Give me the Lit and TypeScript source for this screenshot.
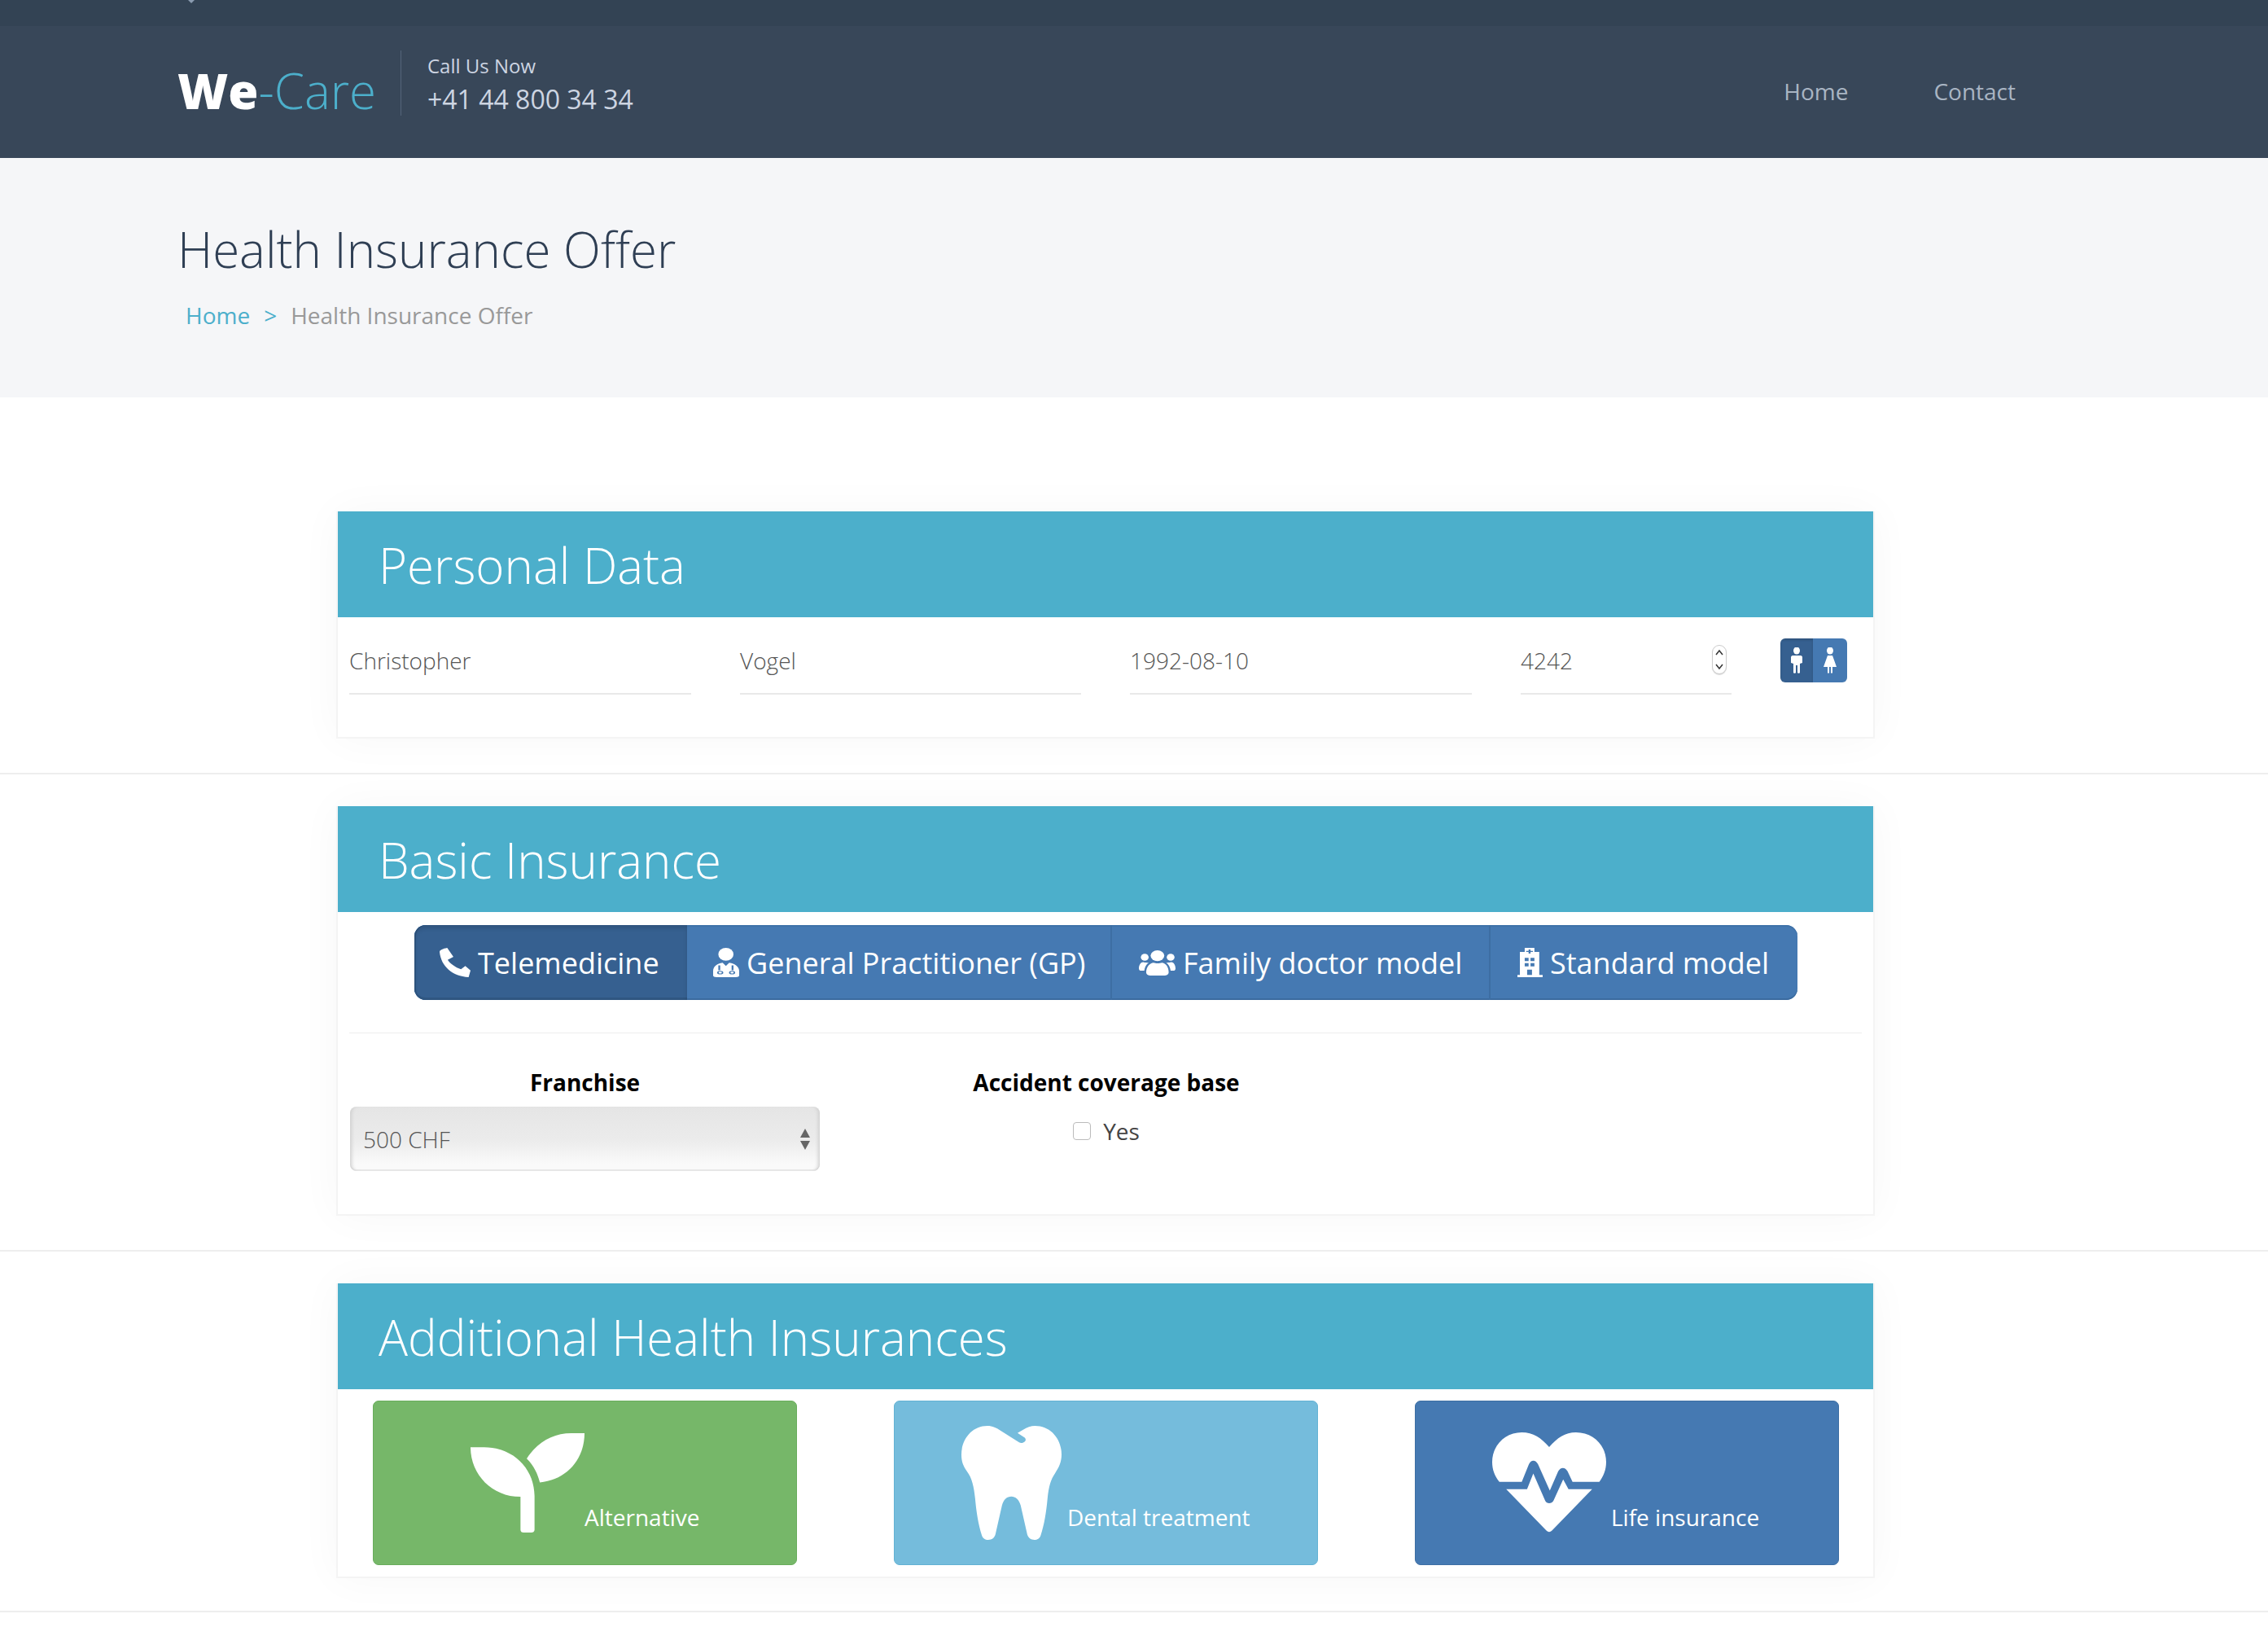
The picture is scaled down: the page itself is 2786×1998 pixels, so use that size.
import { LitElement, css, html, svg } from 'lit'
import { customElement } from 'lit/decorators.js'

const phoneIcon = svg`<path d="M105,172 C105,165 112,160 121,157 L134,190 L122,201 C127,215 138,228 150,236 L159,224 L170,240 L166,265 C132,262 108,225 105,172 Z" />`

const doctorIcon = svg`
  <ellipse cx="717" cy="181" rx="16" ry="24" />
  <path d="M690,260 L690,243 C690,226 698,216 710,212 L717,224 L724,212 C736,216 745,226 745,243 L745,260 C745,264 742,266 738,266 L697,266 C693,266 690,264 690,260 Z" />
  <path d="M703,222 L703,240 M731,222 L731,240" fill="none" stroke="#4579b2" stroke-width="4" />
  <circle cx="705" cy="249" r="5" fill="none" stroke="#4579b2" stroke-width="3" />
  <circle cx="730" cy="249" r="5" fill="none" stroke="#4579b2" stroke-width="3" />
`

const usersIcon = svg`
  <ellipse cx="201" cy="184" rx="14" ry="20" />
  <ellipse cx="175" cy="190" rx="8" ry="13" />
  <ellipse cx="228" cy="190" rx="8" ry="13" />
  <path d="M178,246 C178,225 186,210 193,210 C197,213 206,213 210,210 C217,210 224,225 224,246 C224,255 220,258 214,258 L188,258 C182,258 178,255 178,246 Z" />
  <path d="M163,232 C163,218 167,208 172,208 C176,210 179,210 183,210 C178,217 175,226 174,240 L168,240 C165,240 163,237 163,232 Z" />
  <path d="M238,232 C238,218 234,208 229,208 C225,210 222,210 219,210 C224,217 227,226 228,240 L233,240 C236,240 238,237 238,232 Z" />
`

const hospitalIcon = svg`<path fill-rule="evenodd" d="M935,172 L945,172 L945,157 L965,157 L965,172 L975,172 L975,258 L982,258 L982,266 L930,266 L930,258 L935,258 Z M953,163 L953,168 L948,168 L948,172 L953,172 L953,178 L957,178 L957,172 L962,172 L962,168 L957,168 L957,163 Z M945,194 L945,206 L953,206 L953,194 Z M957,194 L957,206 L965,206 L965,194 Z M945,214 L945,226 L953,226 L953,214 Z M957,214 L957,226 L965,226 L965,214 Z M950,238 L950,258 L960,258 L960,238 Z" />`

const sproutIcon = svg`
  <path d="M387,230 L430,230 C525,230 592,310 592,410 L592,535 C592,541 587,545 582,545 L557,545 C551,545 547,541 547,535 L547,413 C455,413 387,330 387,230 Z" />
  <path d="M567,272 C600,212 650,178 710,178 L752,178 C752,275 695,350 609,360 C602,328 590,298 567,272 Z" />
`

const toothIcon = svg`<path d="M345,152 C362,152 375,160 385,168 L447,213 C455,219 468,212 468,203 C468,198 465,195 462,193 L442,178 L460,166 C472,157 485,152 498,152 C548,152 583,200 583,258 C583,285 575,305 563,325 C548,350 542,375 538,420 C534,470 528,515 516,556 C513,566 505,572 496,572 C485,572 476,565 473,552 L452,445 C447,423 435,412 422,412 C408,412 397,423 392,445 L371,552 C368,565 360,572 348,572 C338,572 330,566 327,554 C316,515 310,470 306,420 C302,375 296,345 280,320 C268,300 262,285 262,258 C262,200 297,152 345,152 Z" />`

const heartIcon = svg`
  <path d="M316,361 C302,340 293,318 293,288 C293,225 335,178 388,178 C425,178 450,198 476,232 C502,198 527,178 562,178 C617,178 659,225 659,288 C659,318 650,340 637,361 L551,361 L535,322 C528,305 512,305 505,322 L478,393 L440,295 C432,278 418,278 411,295 L388,361 Z" />
  <path d="M338,388 L405,388 L425,330 L463,430 C468,443 484,443 490,430 L521,352 L538,388 L614,388 L487,538 C480,548 472,548 465,538 Z" />
`

const models = [
  { label: 'Telemedicine', icon: phoneIcon, box: '105 157 65 108', w: 38, h: 36, width: 335, pad: 31, active: true },
  { label: 'General Practitioner (GP)', icon: doctorIcon, box: '690 157 55 109', w: 32, h: 36, width: 522, pad: 32, active: false },
  { label: 'Family doctor model', icon: usersIcon, box: '163 164 75 94', w: 45, h: 31, width: 465, pad: 33, active: false },
  { label: 'Standard model', icon: hospitalIcon, box: '930 157 52 109', w: 31, h: 36, width: 377, pad: 33, active: false },
]

const tiles = [
  { label: 'Alternative', cls: 'green', icon: sproutIcon, box: '387 178 365 367', w: 140, h: 122, pad: 119, top: 39, gap: 0 },
  { label: 'Dental treatment', cls: 'sky', icon: toothIcon, box: '262 152 321 420', w: 123, h: 140, pad: 82, top: 30, gap: 7 },
  { label: 'Life insurance', cls: 'blue', icon: heartIcon, box: '293 178 366 370', w: 140, h: 123, pad: 94, top: 38, gap: 6 },
]

@customElement('app-root')
export class AppRoot extends LitElement {
  static override styles = css`
    :host {
      display: block;
      min-height: 1998px;
      overflow: hidden;
      background: #fff;
      font-family: 'Open Sans', 'Noto Sans', sans-serif;
      color: #666;
    }

    .strip {
      height: 32px;
      background: #334354;
      position: relative;
    }

    .strip::after {
      content: '';
      position: absolute;
      left: 231px;
      top: 0;
      border: 4px solid transparent;
      border-top-color: #8a9bb0;
    }

    .bar {
      height: 162px;
      box-sizing: border-box;
      background: #384759;
      display: flex;
      align-items: flex-start;
      padding: 30px 310px 0 218px;
    }

    .logo {
      margin-top: 9px;
      font-size: 60px;
      font-weight: 300;
      color: #4cafcb;
      line-height: 80px;
      width: 274px;
      white-space: nowrap;
    }

    .logo b {
      font-weight: 800;
      color: #fff;
    }

    .call {
      border-left: 1px solid #54657a;
      height: 80px;
      padding: 2px 0 0 32px;
      box-sizing: border-box;
      display: flex;
      flex-direction: column;
      color: #cdd5e2;
    }

    .call small {
      font-size: 24px;
      line-height: 34px;
    }

    .call span {
      margin-top: 2px;
      font-size: 32px;
      line-height: 44px;
    }

    nav {
      margin: 31px 0 0 auto;
      display: flex;
      gap: 105px;
      font-size: 28px;
      line-height: 38px;
      color: #a9b5c3;
    }

    .hero {
      height: 294px;
      box-sizing: border-box;
      background: #f5f6f8;
      padding: 72px 0 0 218px;
    }

    h1 {
      margin: 0;
      font-size: 60px;
      line-height: 80px;
      font-weight: 300;
      color: #2f3f54;
    }

    .crumbs {
      margin: 22px 0 0 10px;
      font-size: 28px;
      line-height: 38px;
      color: #999;
      display: flex;
      gap: 17px;
    }

    .crumbs a {
      color: #4cafcb;
    }

    .section {
      box-sizing: border-box;
      border-bottom: 2px solid #eee;
      padding: 39px 0 42px 413px;
    }

    .section.first {
      padding-top: 140px;
    }

    .section.last {
      padding-bottom: 40px;
    }

    .card {
      width: 1890px;
      box-sizing: border-box;
      background: #fff;
      border: 2px solid #f4f4f4;
      border-top: 0;
      box-shadow: 0 0 50px rgba(0, 0, 0, 0.035);
    }

    .card h2 {
      margin: 0;
      height: 130px;
      padding-left: 50px;
      background: #4cafcb;
      color: #fff;
      font-size: 60px;
      font-weight: 300;
      line-height: 132px;
    }

    .fields {
      height: 147px;
      padding: 26px 0 0 14px;
      box-sizing: border-box;
      display: flex;
      align-items: flex-start;
    }

    .field {
      border-bottom: 2px solid #e9e9e9;
      height: 67px;
      font-size: 28px;
      font-weight: 300;
      line-height: 54px;
      margin-right: 60px;
      color: #555;
      display: flex;
      justify-content: space-between;
    }

    .spin {
      width: 18px;
      height: 36px;
      margin: 8px 6px 0 0;
      border: 1px solid #ccc;
      border-radius: 9px;
      box-shadow: 0 1px 1px rgba(0, 0, 0, 0.15);
      box-sizing: border-box;
      background: #fff;
    }

    .spin svg {
      display: block;
    }

    .gender {
      display: flex;
      width: 82px;
      height: 54px;
      border-radius: 6px;
      overflow: hidden;
      box-shadow: inset 0 -2px 0 rgba(0, 0, 0, 0.1);
    }

    .gender i {
      flex: 1;
      display: flex;
      align-items: center;
      justify-content: center;
      background: #4579b2;
    }

    .gender i:first-child {
      flex: 0 0 40px;
      background: #366090;
      box-shadow: inset 0 2px 3px rgba(0, 0, 0, 0.15);
    }

    .models {
      margin: 16px 0 0 94px;
      width: 1699px;
      height: 92px;
      display: flex;
      border-radius: 14px;
      overflow: hidden;
      box-sizing: border-box;
      background: #4579b2;
      box-shadow: inset 0 -2px 0 #3b6b9f, inset 0 2px 0 #3f72a9;
    }

    .model {
      display: flex;
      align-items: center;
      gap: 9px;
      box-sizing: border-box;
      color: #fff;
      font-size: 36px;
      white-space: nowrap;
      border-right: 2px solid #3d6ea3;
    }

    .model:last-child {
      border-right: 0;
    }

    .model.active {
      background: #366090;
      border-right: 0;
      box-shadow: inset 0 4px 5px rgba(0, 0, 0, 0.12), inset 0 -3px 0 #2f5681, inset 2px 0 0 #2f5681;
      border-radius: 14px 0 0 14px;
    }

    .model svg {
      fill: #fff;
      flex: none;
    }

    .rule {
      margin: 40px 14px 0;
      border-top: 1px solid #eee;
    }

    .options {
      height: 222px;
      box-sizing: border-box;
      padding: 40px 0 0 15px;
      display: flex;
    }

    .franchise {
      width: 577px;
    }

    .label {
      font-size: 28px;
      font-weight: 700;
      color: #000;
      line-height: 40px;
      text-align: center;
    }

    .select {
      margin-top: 10px;
      height: 79px;
      border-radius: 8px;
      padding: 0 12px 0 16px;
      display: flex;
      align-items: center;
      justify-content: space-between;
      background: linear-gradient(#e5e5e5, #ebebeb 50%, #fafafa 90%);
      box-shadow: inset 5px 0 4px -3px #cfcfcf, inset -5px 0 4px -3px #cfcfcf, inset 0 -2px 0 #e8e8e8;
      font-size: 28px;
      font-weight: 300;
      color: #555;
    }

    .accident {
      margin-left: 187px;
      width: 330px;
    }

    .yes {
      margin-top: 18px;
      display: flex;
      align-items: center;
      justify-content: center;
      gap: 15px;
      font-size: 28px;
      color: #444;
      line-height: 44px;
    }

    .check {
      width: 22px;
      height: 22px;
      border: 1px solid #bbb;
      border-radius: 4px;
      box-sizing: border-box;
    }

    .tiles {
      padding: 14px 0 14px 43px;
      display: flex;
    }

    .tile {
      width: 521px;
      height: 202px;
      box-sizing: border-box;
      margin-right: 119px;
      border-radius: 7px;
      display: flex;
      align-items: flex-start;
      color: #fff;
      font-size: 28px;
      white-space: nowrap;
      border: 1px solid;
    }

    .tile:last-child {
      margin-right: 0;
    }

    .tile svg {
      fill: #fff;
      flex: none;
    }

    .tile span {
      line-height: 40px;
      margin-top: 122px;
    }

    .green {
      background: #76b769;
      border-color: #69ad5c;
    }

    .sky {
      background: #75bcdc;
      border-color: #63b2d4;
    }

    .blue {
      background: #4579b2;
      border-color: #3d6ea3;
    }
  `

  override render() {
    return html`
      <header>
        <div class="strip"></div>
        <div class="bar">
          <div class="logo"><b>We</b>-Care</div>
          <div class="call">
            <small>Call Us Now</small>
            <span>+41 44 800 34 34</span>
          </div>
          <nav><span>Home</span><span>Contact</span></nav>
        </div>
      </header>
      <div class="hero">
        <h1>Health Insurance Offer</h1>
        <div class="crumbs"><a>Home</a><a>&gt;</a><span>Health Insurance Offer</span></div>
      </div>

      <section class="section first">
        <div class="card">
          <h2>Personal Data</h2>
          <div class="fields">
            <div class="field" style="width:420px">Christopher</div>
            <div class="field" style="width:419px">Vogel</div>
            <div class="field" style="width:420px">1992-08-10</div>
            <div class="field" style="width:259px">
              4242
              <div class="spin">
                <svg width="16" height="34" viewBox="0 0 16 34" fill="none" stroke="#333" stroke-width="1.5">
                  <path d="M4,11 L8,6 L12,11 M4,23 L8,28 L12,23" />
                </svg>
              </div>
            </div>
            <div class="gender">
              <i>
                <svg width="14" height="32" viewBox="0 0 14 32" fill="#fff">
                  <ellipse cx="7" cy="4" rx="4" ry="4.5" />
                  <path d="M2,10 L12,10 C13,10 14,11 14,12 L14,19 L11,20 L11,31 C11,32 8,32 8,31 L8,22 L6,22 L6,31 C6,32 3,32 3,31 L3,20 L0,19 L0,12 C0,11 1,10 2,10 Z" />
                </svg>
              </i>
              <i>
                <svg width="16" height="32" viewBox="0 0 16 32" fill="#fff">
                  <ellipse cx="8" cy="4" rx="4" ry="4.5" />
                  <path d="M5,10 L11,10 L16,24 L11,24 L11,31 C11,32 9,32 9,31 L9,24 L7,24 L7,31 C7,32 5,32 5,31 L5,24 L0,24 Z" />
                </svg>
              </i>
            </div>
          </div>
        </div>
      </section>

      <section class="section">
        <div class="card">
          <h2>Basic Insurance</h2>
          <div class="models">
            ${models.map(
              (m) => html`
                <div class="model ${m.active ? 'active' : ''}" style="width:${m.width}px;padding-left:${m.pad}px">
                  <svg width=${m.w} height=${m.h} viewBox=${m.box} preserveAspectRatio="none">${m.icon}</svg>
                  ${m.label}
                </div>
              `,
            )}
          </div>
          <div class="rule"></div>
          <div class="options">
            <div class="franchise">
              <div class="label">Franchise</div>
              <div class="select">
                500 CHF
                <svg width="12" height="26" viewBox="0 0 12 26" fill="#666">
                  <path d="M6,0 L12,11 L0,11 Z M0,15 L12,15 L6,26 Z" />
                </svg>
              </div>
            </div>
            <div class="accident">
              <div class="label">Accident coverage base</div>
              <div class="yes"><span class="check"></span>Yes</div>
            </div>
          </div>
        </div>
      </section>

      <section class="section last">
        <div class="card">
          <h2>Additional Health Insurances</h2>
          <div class="tiles">
            ${tiles.map(
              (t) => html`
                <div class="tile ${t.cls}">
                  <svg
                    width=${t.w}
                    height=${t.h}
                    viewBox=${t.box}
                    preserveAspectRatio="none"
                    style="margin:${t.top}px ${t.gap}px 0 ${t.pad}px"
                  >
                    ${t.icon}
                  </svg>
                  <span>${t.label}</span>
                </div>
              `,
            )}
          </div>
        </div>
      </section>
    `
  }
}

declare global {
  interface HTMLElementTagNameMap {
    'app-root': AppRoot
  }
}
